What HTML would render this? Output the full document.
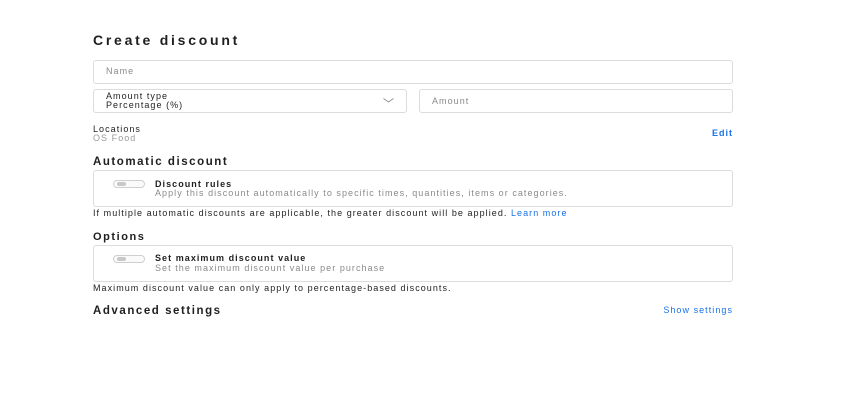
<!DOCTYPE html>
<html><head><meta charset="utf-8"><style>
body{margin:0;width:851px;height:408px;background:#fff;font-family:"Liberation Sans",sans-serif;color:#1f1f1f;position:relative;overflow:hidden}
.a{position:absolute;white-space:nowrap}
.r{position:absolute;white-space:nowrap;right:118px}
.box{position:absolute;border:1px solid #dcdcdc;border-radius:3px;box-sizing:border-box}
.s{font-size:9px;letter-spacing:1.05px}
.g{color:#8a8a8a}
.h{font-size:11.5px;font-weight:bold;letter-spacing:1.55px}
.b{color:#1a73e8}
.tg{position:absolute;width:32px;height:8px;border:1px solid #cfcfcf;border-radius:5px;box-sizing:border-box;background:#fafafa}
.tg:after{content:"";position:absolute;left:3px;top:1px;width:9px;height:4px;border-radius:3px;background:#c8c8c8}
</style></head><body>
<div class="a" style="left:93px;top:32px;font-size:14px;font-weight:bold;letter-spacing:2.75px">Create discount</div>
<div class="box" style="left:93px;top:60px;width:640px;height:24px"></div>
<div class="a s g" style="left:106px;top:66px">Name</div>
<div class="box" style="left:93px;top:89px;width:314px;height:24px"></div>
<div class="a s" style="left:106px;top:91px">Amount type</div>
<div class="a s" style="left:106px;top:100px">Percentage (%)</div>
<svg class="a" style="left:383px;top:98px" width="11" height="5"><path d="M0.5 0.5L5.5 4L10.5 0.5" fill="none" stroke="#888" stroke-width="0.8"/></svg>
<div class="box" style="left:419px;top:89px;width:314px;height:24px"></div>
<div class="a s g" style="left:432px;top:96px">Amount</div>
<div class="a s" style="left:93px;top:124px">Locations</div>
<div class="a s g" style="left:93px;top:133px;color:#9a9a9a">OS Food</div>
<div class="r s b" style="top:128px;font-weight:bold;letter-spacing:1px">Edit</div>
<div class="a h" style="left:93px;top:156px">Automatic discount</div>
<div class="box" style="left:93px;top:170px;width:640px;height:37px"></div>
<div class="tg" style="left:113px;top:180px"></div>
<div class="a s" style="left:155px;top:179px;font-weight:bold">Discount rules</div>
<div class="a s g" style="left:155px;top:188px">Apply this discount automatically to specific times, quantities, items or categories.</div>
<div class="a s" style="left:93px;top:208px">If multiple automatic discounts are applicable, the greater discount will be applied. <span class="b">Learn more</span></div>
<div class="a h" style="left:93px;top:231px;font-size:11px">Options</div>
<div class="box" style="left:93px;top:245px;width:640px;height:37px"></div>
<div class="tg" style="left:113px;top:255px"></div>
<div class="a s" style="left:155px;top:253px;font-weight:bold">Set maximum discount value</div>
<div class="a s g" style="left:155px;top:263px">Set the maximum discount value per purchase</div>
<div class="a s" style="left:93px;top:283px">Maximum discount value can only apply to percentage-based discounts.</div>
<div class="a h" style="left:93px;top:305px">Advanced settings</div>
<div class="r s b" style="top:305px">Show settings</div>
</body></html>
